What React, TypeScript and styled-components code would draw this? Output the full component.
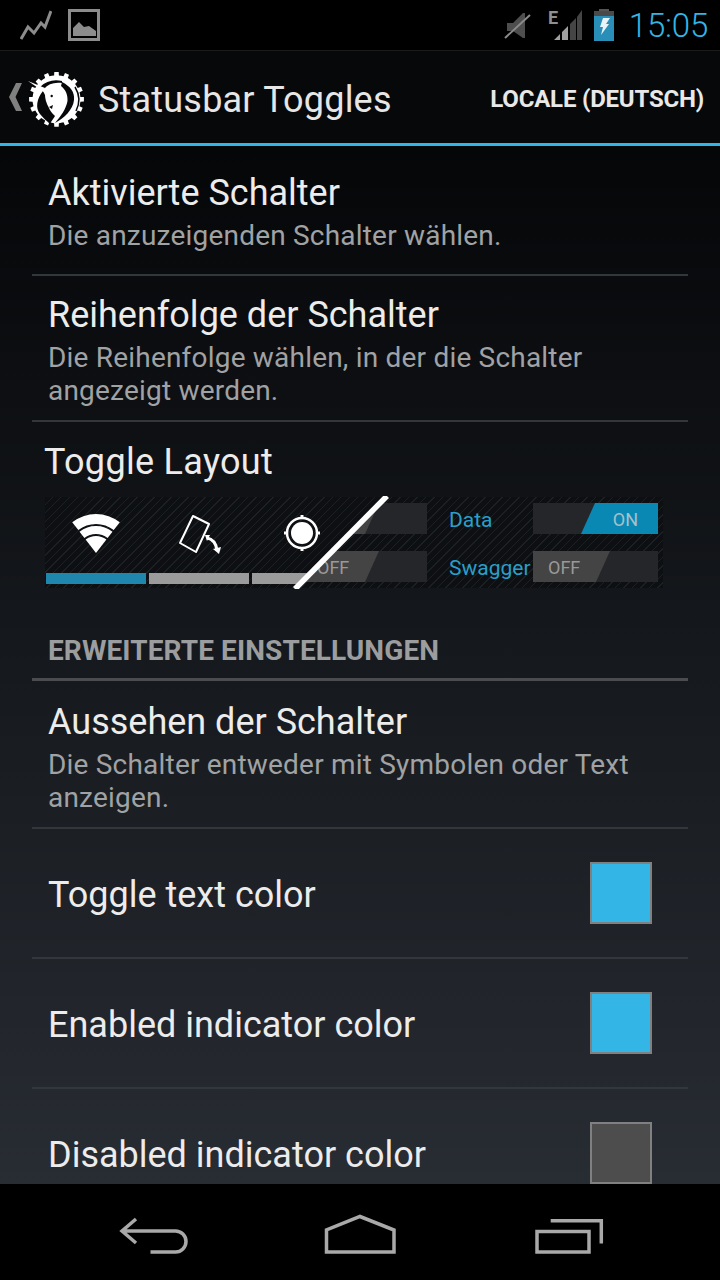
import React from "react"
import styled, { createGlobalStyle } from "styled-components"

const GlobalStyle = createGlobalStyle`
  html, body {
    margin: 0;
    padding: 0;
    background: #000;
  }
  body {
    font-family: Roboto, "Noto Sans", sans-serif;
  }
`

const Screen = styled.div`
  width: 720px;
  height: 1280px;
  display: flex;
  flex-direction: column;
  overflow: hidden;
  background: #000;
`

const StatusBar = styled.div`
  height: 50px;
  flex: none;
  display: flex;
  align-items: center;
  padding: 0 12px 0 20px;
  border-bottom: 1px solid #1b1b1b;
  background: #000;
`

const StatusLeft = styled.div`
  display: flex;
  align-items: center;
  gap: 16px;
  flex: 1;
`

const StatusRight = styled.div`
  display: flex;
  align-items: center;
`

const StatusIcon = styled.svg<{ $gap: number }>`
  flex: none;
  display: block;
  margin-left: ${p => p.$gap}px;
`

const Clock = styled.span`
  font-size: 33px;
  letter-spacing: -0.2px;
  color: #33b5e5;
  margin-left: 15px;
  font-weight: 300;
`

const ActionBar = styled.div`
  height: 92px;
  flex: none;
  display: flex;
  align-items: center;
  padding: 0 16px 0 8px;
  background: #070809;
`

const Chevron = styled.svg`
  width: 14px;
  height: 28px;
  flex: none;
  margin-right: 6px;
`

const Logo = styled.svg`
  width: 56px;
  height: 56px;
  flex: none;
  margin-top: 3px;
`

const Title = styled.h1`
  margin: 5px 0 0 14px;
  flex: 1;
  font-size: 36px;
  font-weight: 400;
  letter-spacing: 0.2px;
  color: #e6e6e6;
`

const ActionLabel = styled.span`
  margin-top: 3px;
  font-size: 24px;
  font-weight: 700;
  letter-spacing: -0.2px;
  color: #e8e8e8;
`

const BlueRule = styled.div`
  height: 3px;
  flex: none;
  background: #33b5e5;
`

const Content = styled.div`
  flex: 1;
  min-height: 0;
  overflow: hidden;
  padding: 0 32px;
  background: linear-gradient(180deg, #050608 0%, #14171b 45%, #282c33 100%);
`

const Row = styled.div<{ $height: number; $top: number }>`
  height: ${p => p.$height}px;
  box-sizing: border-box;
  padding: ${p => p.$top}px 16px 0;
  border-bottom: 2px solid #33363a;
`

const RowTitle = styled.div`
  font-size: 36px;
  line-height: 42px;
  margin-bottom: 5px;
  color: #ececec;
`

const RowText = styled.div`
  font-size: 28px;
  line-height: 33px;
  letter-spacing: 0.2px;
  color: #a0a2a4;
`

const ColorRow = styled.div<{ $last?: boolean }>`
  height: 130px;
  box-sizing: border-box;
  display: flex;
  align-items: center;
  justify-content: space-between;
  padding: 0 36px 0 16px;
  border-bottom: 2px solid ${p => (p.$last ? "transparent" : "#33363a")};
`

const ColorName = styled.span`
  padding-top: 3px;
  font-size: 36px;
  color: #ececec;
`

const Swatch = styled.div<{ $color: string }>`
  width: 62px;
  height: 62px;
  box-sizing: border-box;
  border: 2px solid #808080;
  background: ${p => p.$color};
`

const LayoutBlock = styled.div`
  height: 178px;
  margin-left: 13px;
`

const LayoutTitle = styled.div`
  font-size: 36px;
  line-height: 42px;
  letter-spacing: 0.3px;
  margin-left: -1px;
  padding-top: 19px;
  color: #ececec;
`

const Preview = styled.div`
  position: relative;
  margin-top: 14px;
  width: 618px;
  height: 91px;
  background: repeating-linear-gradient(135deg, #0d0f12 0 5px, #1b2022 5px 6px);
`

const SwitchGrid = styled.div`
  display: grid;
  grid-template-columns: 125px 106px 125px;
  justify-content: end;
  row-gap: 17px;
  padding: 6px 5px 0 0;
  align-items: center;
`

const SwitchName = styled.span`
  font-size: 21px;
  color: #2a9fca;
  padding: 2px 0 0 22px;
  white-space: nowrap;
`

const Switch = styled.div`
  height: 31px;
  position: relative;
  background: #24262a;
  font-size: 18px;
  line-height: 33px;
  color: #999;
`

const Thumb = styled.div<{ $on?: boolean }>`
  position: absolute;
  top: 0;
  bottom: 0;
  width: 77px;
  ${p => (p.$on ? "right: 0;" : "left: 0;")}
  background: ${p => (p.$on ? "#0a88b4" : "#444")};
  color: ${p => (p.$on ? "#a8c0ca" : "#999")};
  clip-path: ${p =>
    p.$on
      ? "polygon(14px 0, 100% 0, 100% 100%, 0 100%)"
      : "polygon(0 0, 100% 0, calc(100% - 14px) 100%, 0 100%)"};
  text-align: ${p => (p.$on ? "right" : "left")};
  padding: 0 20px 0 15px;
  box-sizing: border-box;
`

const TileLayer = styled.div`
  position: absolute;
  inset: 0;
  clip-path: polygon(0 0, 342px 0, 251px 100%, 0 100%);
  background: repeating-linear-gradient(135deg, #0d0f12 0 5px, #1b2022 5px 6px);
  display: grid;
  grid-template-columns: 100px 100px 100px;
  column-gap: 3px;
  justify-content: start;
  padding-left: 1px;
`

const Tile = styled.div<{ $on?: boolean }>`
  display: flex;
  flex-direction: column;
  align-items: center;
  justify-content: flex-end;
  padding-bottom: 4px;
  &::after {
    content: "";
    display: block;
    align-self: stretch;
    margin-top: 13px;
    height: 11px;
    background: ${p => (p.$on ? "#1f86ad" : "#9b9b9b")};
  }
`

const TileIcon = styled.svg`
  width: 60px;
  height: 46px;
`

const Slash = styled.svg`
  position: absolute;
  left: 240px;
  top: -1px;
  width: 110px;
  height: 93px;
`

const SectionHeader = styled.div`
  height: 81px;
  box-sizing: border-box;
  padding: 30px 16px 0;
  border-bottom: 3px solid #4a4c50;
  font-size: 28px;
  line-height: 42px;
  letter-spacing: 0.1px;
  font-weight: 700;
  color: #9b9d9f;
`

const NavBar = styled.div`
  height: 96px;
  flex: none;
  display: flex;
  align-items: center;
  gap: 128px;
  padding-left: 114px;
  background: #000;
`

const NavIcon = styled.svg`
  width: 80px;
  height: 44px;
  flex: none;
`

const rows = [
  { title: "Aktivierte Schalter", text: ["Die anzuzeigenden Schalter wählen."], height: 130, top: 26 },
  {
    title: "Reihenfolge der Schalter",
    text: ["Die Reihenfolge wählen, in der die Schalter", "angezeigt werden."],
    height: 146,
    top: 18,
  },
]

function gearPath() {
  const teeth = 16
  const cx = 28.5
  const cy = 28.3
  const step = (Math.PI * 2) / teeth
  let d = ""
  for (let i = 0; i < teeth; i++) {
    const a = i * step
    const pts = [
      [24, a - step * 0.5],
      [24, a - step * 0.25],
      [27.5, a - step * 0.2],
      [27.5, a + step * 0.2],
      [24, a + step * 0.25],
    ]
    pts.forEach(([r, t], j) => {
      const x = (cx + Math.cos(t) * r).toFixed(1)
      const y = (cy + Math.sin(t) * r).toFixed(1)
      d += `${i === 0 && j === 0 ? "M" : "L"}${x} ${y} `
    })
  }
  return d + "Z"
}

const App: React.FC = () => {
  return (
    <Screen>
      <GlobalStyle />
      <StatusBar>
        <StatusLeft>
          <svg width="32" height="32" viewBox="0 0 32 32" fill="none">
            <path d="M1 30 L8 18 L14 24 L21 14 L25 18 L31 2" stroke="#8c8c8c" strokeWidth="3" />
          </svg>
          <svg width="32" height="32" viewBox="0 0 32 32">
            <rect x="1.5" y="1.5" width="29" height="29" fill="none" stroke="#8c8c8c" strokeWidth="3" />
            <path d="M5 27 V19 L11 13 L16 18 L21 17 L28 22 V27 Z" fill="#8c8c8c" />
          </svg>
        </StatusLeft>
        <StatusRight>
          <StatusIcon $gap={0} width="30" height="32" viewBox="0 0 30 32">
            <path d="M4 14 H10 L20 4 H22 V29 H20 L10 22 H4 Z" fill="#4e4e4e" />
            <path d="M2 29 L27 6" stroke="#8a8a8a" strokeWidth="2" />
          </StatusIcon>
          <StatusIcon $gap={13} width="40" height="40" viewBox="0 0 40 40">
            <path d="M8 35 L14 29 V35 Z M16 27 L22 21 V35 H16 Z" fill="#a0a0a0" />
            <path d="M24 19 L30 13 V35 H24 Z M31 12 L36 5 V35 H31 Z" fill="#454545" />
            <text x="2" y="19" fontSize="18" fontWeight="700" fill="#8f8f8f" fontFamily="Roboto">E</text>
          </StatusIcon>
          <StatusIcon $gap={8} width="20" height="32" viewBox="0 0 20 32">
            <rect x="5" y="0" width="10" height="2" fill="#555" />
            <rect x="0" y="2" width="20" height="5" fill="#4a4a4a" />
            <rect x="0" y="7" width="20" height="25" fill="#2a8fb8" />
            <path d="M9 9 H16 L12 15 H15 L7 26 L9 18 H6 Z" fill="#e8f4f8" />
          </StatusIcon>
          <Clock>15:05</Clock>
        </StatusRight>
      </StatusBar>
      <ActionBar>
        <Chevron viewBox="0 0 14 28">
          <path d="M8 0 H14 L7.5 14 L14 28 H8 L1 14 Z" fill="#808080" />
        </Chevron>
        <Logo viewBox="0 0 56 56">
          <path d={gearPath()} fill="#fff" />
          <path d="M12 16 C18 10 26 8 34 10 L34 12 C26 11 20 13 16 18 Z" fill="#070809" />
          <path d="M15 20 C9 27 7 37 12 43 C15 47 19 50 22 53 C24 49 26 47 27 45 C24 42 22 40 21 37 C18 32 17 27 17 24 Z" fill="#070809" />
          <path d="M34 11 C42 15 47 21 46 29 C45 39 36 47 27 52 C33 45 38 38 39.5 30 C40 23 37 18 33 15 Z" fill="#070809" />
          <path d="M47 16 C52 24 52 32 48 40" fill="none" stroke="#070809" strokeWidth="1.5" />
          <path d="M21 36 L25 34 L24 38 Z" fill="#070809" />
          <circle cx="23.7" cy="25" r="1.2" fill="#070809" />
          <path d="M0 10 L17 17 L16 21 Z" fill="#fff" />
        </Logo>
        <Title>Statusbar Toggles</Title>
        <ActionLabel>LOCALE (DEUTSCH)</ActionLabel>
      </ActionBar>
      <BlueRule />
      <Content>
        {rows.map(r => (
          <Row key={r.title} $height={r.height} $top={r.top}>
            <RowTitle>{r.title}</RowTitle>
            {r.text.map(t => (
              <RowText key={t}>{t}</RowText>
            ))}
          </Row>
        ))}
        <LayoutBlock>
          <LayoutTitle>Toggle Layout</LayoutTitle>
          <Preview>
            <SwitchGrid>
              <Switch>
                <Thumb />
              </Switch>
              <SwitchName>Data</SwitchName>
              <Switch>
                <Thumb $on>ON</Thumb>
              </Switch>
              <Switch>
                <Thumb>OFF</Thumb>
              </Switch>
              <SwitchName>Swagger</SwitchName>
              <Switch>
                <Thumb>OFF</Thumb>
              </Switch>
            </SwitchGrid>
            <TileLayer>
              <Tile $on>
                <TileIcon viewBox="0 0 60 46">
                  <path d="M6.2 8.2 A39 39 0 0 1 53.8 8.2 L47.7 16.1 A29 29 0 0 0 12.3 16.1 Z" fill="#fff" />
                  <path d="M13.5 17.7 A27 27 0 0 1 46.5 17.7 L41.6 24 A19 19 0 0 0 18.4 24 Z" fill="#fff" />
                  <path d="M19.6 25.6 A17 17 0 0 1 40.4 25.6 L30 39 Z" fill="#fff" />
                </TileIcon>
              </Tile>
              <Tile>
                <TileIcon viewBox="0 0 60 46">
                  <path d="M24 2 L40 10 L27 38 L11 29 Z" fill="none" stroke="#fff" strokeWidth="2" strokeLinejoin="round" />
                  <path d="M38 24 C44 25 47 30 48 36" fill="none" stroke="#fff" strokeWidth="3" />
                  <path d="M44 35 L52 33 L50 40 Z M36 21 L41 21 L38 27 Z" fill="#fff" />
                </TileIcon>
              </Tile>
              <Tile>
                <TileIcon viewBox="0 0 60 46">
                  <circle cx="30" cy="19" r="15" fill="none" stroke="#fff" strokeWidth="2.5" />
                  <circle cx="30" cy="19" r="11" fill="#fff" />
                  <path d="M30 1 V5 M30 33 V37 M12 19 H16 M44 19 H48" stroke="#fff" strokeWidth="3" />
                </TileIcon>
              </Tile>
            </TileLayer>
            <Slash viewBox="0 0 110 93">
              <path d="M10 93 L102 0" stroke="#fff" strokeWidth="5.5" />
            </Slash>
          </Preview>
        </LayoutBlock>
        <SectionHeader>ERWEITERTE EINSTELLUNGEN</SectionHeader>
        <Row $height={148} $top={20}>
          <RowTitle>Aussehen der Schalter</RowTitle>
          <RowText>Die Schalter entweder mit Symbolen oder Text</RowText>
          <RowText>anzeigen.</RowText>
        </Row>
        <ColorRow>
          <ColorName>Toggle text color</ColorName>
          <Swatch $color="#33b5e5" />
        </ColorRow>
        <ColorRow>
          <ColorName>Enabled indicator color</ColorName>
          <Swatch $color="#33b5e5" />
        </ColorRow>
        <ColorRow $last>
          <ColorName>Disabled indicator color</ColorName>
          <Swatch $color="#4d4d4d" />
        </ColorRow>
      </Content>
      <NavBar>
        <NavIcon viewBox="0 0 80 44">
          <path d="M22 9 L8 21 L22 33 M8 21 H61.5 A10.5 10.5 0 0 1 61.5 42 H36.5" fill="none" stroke="#a9a9a9" strokeWidth="3.5" />
        </NavIcon>
        <NavIcon viewBox="0 0 80 44">
          <path d="M4.5 42 V20 L38 6.5 L72 20 V42 Z" fill="none" stroke="#a9a9a9" strokeWidth="3.5" />
        </NavIcon>
        <NavIcon viewBox="0 0 80 44">
          <path d="M20.7 10.7 H71.3 V33.4" fill="none" stroke="#a9a9a9" strokeWidth="3.5" />
          <rect x="7" y="21.5" width="52" height="20.5" fill="none" stroke="#a9a9a9" strokeWidth="3.5" />
        </NavIcon>
      </NavBar>
    </Screen>
  )
}

export default App
